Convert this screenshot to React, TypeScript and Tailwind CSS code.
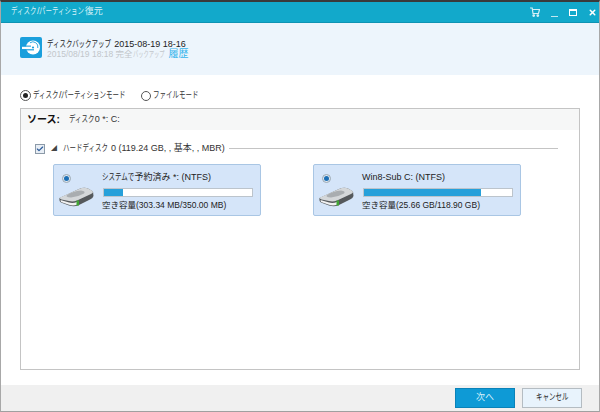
import React from 'react';
import { Check, X } from 'lucide-react';

const fontStack = "font-['Liberation_Sans','Noto_Sans_CJK_JP',sans-serif]";

// The katakana in this window are much narrower than a full em, so squeeze them
const Kana = ({ text, size = 9, ratio = 0.72 }: { text: string; size?: number; ratio?: number }) => (
  <span className="inline-block origin-left scale-x-[0.72] whitespace-nowrap" style={{ width: text.length * size * ratio }}>
    {text}
  </span>
);

// Small drive picture used on both partition cards
const DriveIcon = () => (
  <svg width="35" height="20" viewBox="0 0 35 20">
    <path d="M0.5 11 L20 2 Q25 0 29 1.5 L34 4.5 L34.5 9 Q34 11 31 12.5 L19 18.5 Q15 20 10 18.5 L2 15.5 Q0 14.5 0.5 11 Z" fill="#55595c" />
    <path d="M1 10.5 L20 2 Q25 0 29 1.5 L33.5 4 Q35 5.5 32 7 L18 13.5 Q14 15 10 14 L2.5 12.5 Q0 11.5 1 10.5 Z" fill="#d4d7d9" />
    <path d="M8 8 Q14 4 22 3.5 Q27 4 25 6.5 Q19 10 12 10.5 Q6 10 8 8 Z" fill="#a9adb0" />
    <path d="M1.5 13 L10 15.5 Q14 16.5 18 15 L18 17.8 Q14 19 10 17.8 L2 15 Z" fill="#f1f2f3" />
    <rect x="17.5" y="13.5" width="2.5" height="5" fill="#3fa535" />
  </svg>
);

const partitions = [
  { kana: 'システムで', rest: '予約済み *: (NTFS)', free: '(303.34 MB/350.00 MB)', used: 13 },
  { kana: '', rest: 'Win8-Sub C: (NTFS)', free: '(25.66 GB/118.90 GB)', used: 79 },
];

export default function App() {
  return (
    <div className={`flex h-[412px] w-[600px] flex-col overflow-hidden border-x border-t-2 border-b border-x-[#a8a8a8] border-t-[#3a3a3a] border-b-[#a0a0a0] bg-white text-[9px] text-[#333] ${fontStack}`}>
      {/* Title bar */}
      <div className="flex h-[21px] shrink-0 items-center justify-between border-b border-[#0e93b3] bg-[#12a9cb] pl-[10px] pr-[2px] text-[#d8f1f7]">
        <span className="whitespace-nowrap">
          <Kana text="ディスク" />/<Kana text="パーティション" />復元
        </span>
        <div className="flex items-center gap-[11px] text-white">
          <svg width="10" height="10" viewBox="0 0 10 10" fill="none" stroke="#d5f0f6" strokeWidth="1.2">
            <path d="M0 1 H2.2 L3 6.5 H8.5 L9.5 2.5 H2.6" />
            <circle cx="3.7" cy="8.6" r="0.8" fill="#d5f0f6" />
            <circle cx="7.8" cy="8.6" r="0.8" fill="#d5f0f6" />
          </svg>
          <span className="mt-[8px] h-[1px] w-[7px] bg-[#bfe8f1]" />
          <span className="h-[7px] w-[8px] border border-t-2 border-white" />
          <X size={9} strokeWidth={4} className="text-white" />
        </div>
      </div>

      {/* Backup info */}
      <div className="flex h-[52px] shrink-0 items-center gap-[5px] bg-[#edf5fc] pl-[19px] pb-[3px]">
        <div className="flex h-[21px] w-[22px] items-center justify-center rounded-[2px] bg-[#1a9fdc]">
          <svg width="19" height="15" viewBox="0 0 19 15" fill="none">
            <circle cx="11" cy="7.5" r="7" fill="#fff" />
            <path d="M8 2.8 A5 5 0 0 1 15.8 8" stroke="#1a9fdc" strokeWidth="0.9" />
            <circle cx="11" cy="7.5" r="1.1" fill="#1a9fdc" />
            <rect x="0" y="5.6" width="9" height="1.2" fill="#1a9fdc" />
            <rect x="0" y="6.8" width="9" height="2.4" fill="#fff" />
            <rect x="0" y="9.2" width="12" height="1.2" fill="#1a9fdc" />
          </svg>
        </div>
        <div className="mt-[2px] leading-[10px]">
          <div className="whitespace-nowrap text-[#222]">
            <Kana text="ディスクバックアップ" /> 2015-08-19 18-16
          </div>
          <div className="flex items-center whitespace-nowrap text-[8.5px] text-[#c2c6ca]">
            <span>2015/08/19 18:18 完全</span>
            <span className="w-[32px] origin-left scale-x-[0.62]">バックアップ</span>
            <span className="ml-[4px] text-[10px] text-[#35b4ec]">履歴</span>
          </div>
        </div>
      </div>

      {/* Mode selection */}
      <div className="flex h-[33px] shrink-0 items-center pl-[19px] pt-[8px]">
        <span className="flex items-center gap-[2px] whitespace-nowrap">
          <span className="flex h-[11px] w-[11px] items-center justify-center rounded-full border border-[#555]">
            <span className="h-[5px] w-[5px] rounded-full bg-[#222]" />
          </span>
          <span>
            <Kana text="ディスク" />/<Kana text="パーティションモード" />
          </span>
        </span>
        <span className="ml-[15px] flex items-center gap-[2px] whitespace-nowrap">
          <span className="h-[10px] w-[10px] rounded-full border border-[#555]" />
          <Kana text="ファイルモード" />
        </span>
      </div>

      {/* Source box */}
      <div className="ml-[19px] mr-[19px] flex h-[262px] shrink-0 flex-col border border-[#c4c4c4]">
        <div className="flex h-[21px] items-center gap-[9px] bg-[#f6f7f7] pl-[6px] whitespace-nowrap">
          <span className="text-[10px] font-bold text-[#111]">ソース:</span>
          <span>
            <Kana text="ディスク" />0 *: C:
          </span>
        </div>
        <div className="mt-[12px] flex items-center pl-[14px] pr-[21px] whitespace-nowrap">
          <span className="flex h-[10px] w-[10px] items-center justify-center border border-[#8c9aa8] bg-[#e8eef5]">
            <Check size={8} strokeWidth={3.5} className="text-[#2a5a9a]" />
          </span>
          <span className="ml-[6px] text-[6px] text-[#444]">◢</span>
          <span className="ml-[6px]">
            <Kana text="ハードディスク" /> 0 (119.24 GB, , 基本, , MBR)
          </span>
          <span className="ml-[4px] h-[1px] flex-1 bg-[#c4c4c4]" />
        </div>
        <div className="mt-[8px] flex gap-[52px] pl-[32px]">
          {partitions.map((p) => (
            <div key={p.rest} className="flex h-[52px] w-[208px] rounded-[2px] border border-[#a9c6e4] bg-[#d5e5f9]">
              <div className="flex w-[48px] flex-col items-start pl-[5px] pt-[9px]">
                <span className="ml-[3px] flex h-[9px] w-[9px] items-center justify-center rounded-full border border-[#9aa8b4] bg-[#dfe8f0]">
                  <span className="h-[5px] w-[5px] rounded-full bg-[#1c6fb5]" />
                </span>
                <span className="mt-[4px]">
                  <DriveIcon />
                </span>
              </div>
              <div className="w-[151px] pt-[6px]">
                <div className="h-[12px] whitespace-nowrap leading-[12px] text-[#222]">
                  {p.kana && <Kana text={p.kana} />}
                  {p.rest}
                </div>
                <div className="ml-[1px] mt-[5px] h-[9px] border border-[#bcc4cc] bg-white">
                  <div className="h-full bg-[#26a0da]" style={{ width: `${p.used}%` }} />
                </div>
                <div className="mt-[2px] h-[12px] whitespace-nowrap text-[8.5px] leading-[12px] text-[#222]">空き容量{p.free}</div>
              </div>
            </div>
          ))}
        </div>
      </div>

      {/* Footer */}
      <div className="mt-[15px] flex flex-1 items-center justify-end gap-[7px] bg-[#f0f0f0] pr-[17px]">
        <button className="flex h-[20px] w-[60px] items-center justify-center border border-[#0a82b8] bg-[#0e9ad6] text-[#d7f0fb]">次へ</button>
        <button className="flex h-[20px] w-[60px] items-center justify-center border border-[#b4bcc2] bg-[#e8f3fc] text-[#222]">
          <Kana text="キャンセル" />
        </button>
      </div>
    </div>
  );
}
